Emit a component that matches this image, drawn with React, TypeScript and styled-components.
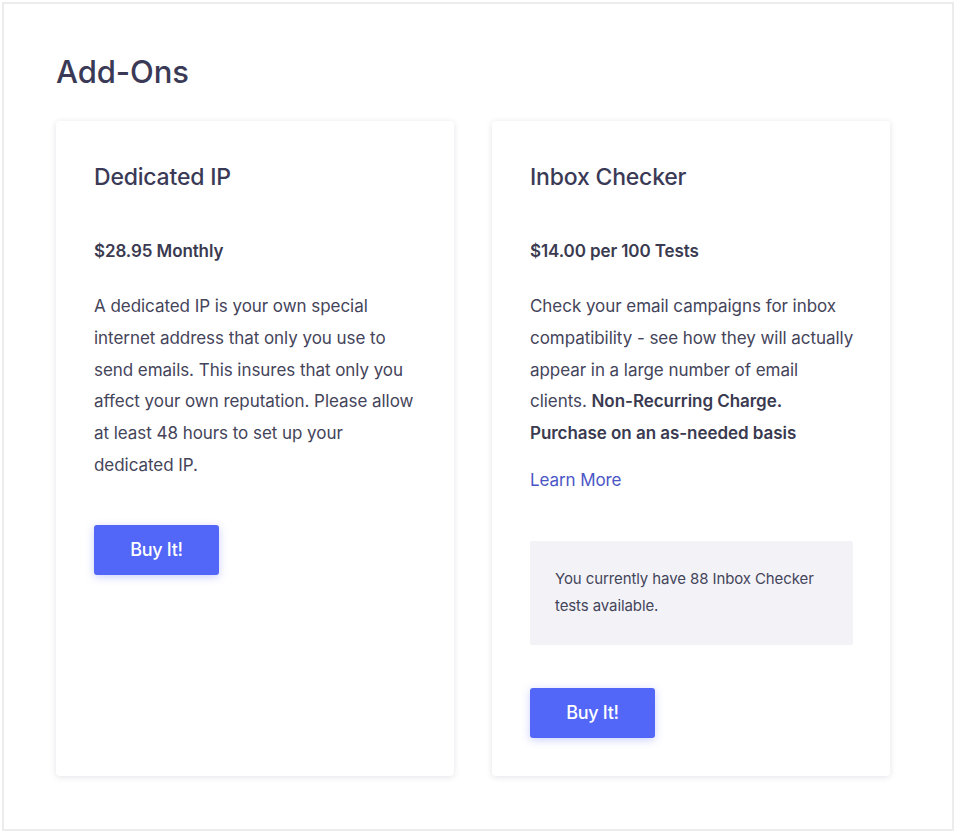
import React from "react";
import styled, { createGlobalStyle } from "styled-components";

const GlobalStyle = createGlobalStyle`
  html, body {
    margin: 0;
    padding: 0;
    background: #ffffff;
  }
  body {
    font-family: Inter, "Noto Sans", sans-serif;
    color: #3b3b55;
    -webkit-font-smoothing: antialiased;
  }
`

const Frame = styled.div`
  margin: 2px;
  height: 829px;
  border: 2px solid #ececec;
  box-sizing: border-box;
  padding: 50px 0 0 52px;
`

const PageTitle = styled.h1`
  margin: 0 0 31px 0;
  font-size: 31px;
  line-height: 36px;
  font-weight: 500;
  color: #3a3a56;
  letter-spacing: -0.1px;
`

const CardGrid = styled.div`
  display: grid;
  grid-template-columns: 398px 398px;
  gap: 38px;
  align-items: stretch;
`

const Card = styled.section`
  background: #ffffff;
  border-radius: 4px;
  box-shadow: 0 1px 6px rgba(40, 40, 80, 0.13);
  padding: 42px 33px 38px 38px;
  display: flex;
  flex-direction: column;
  align-items: flex-start;
`

const CardTitle = styled.h2`
  margin: 0 0 47px 0;
  font-size: 23px;
  line-height: 29px;
  font-weight: 500;
  color: #3a3a56;
  letter-spacing: -0.2px;
`

const Price = styled.div`
  font-size: 17px;
  line-height: 24px;
  font-weight: 600;
  color: #3a3a50;
  margin-bottom: 28px;
  letter-spacing: -0.1px;
`

const Description = styled.p`
  margin: 0;
  font-size: 17px;
  line-height: 31.8px;
  font-weight: 400;
  color: #44445a;
  letter-spacing: -0.05px;
  max-width: 326px;

  strong {
    font-weight: 600;
    color: #3a3a50;
  }
`

const LearnMore = styled.a`
  display: block;
  margin-top: 18px;
  font-size: 17px;
  line-height: 24px;
  color: #4a56c6;
  text-decoration: none;
  letter-spacing: -0.1px;
  cursor: pointer;
`

const InfoBox = styled.div`
  margin-top: 49px;
  width: 323px;
  box-sizing: border-box;
  background: #f3f3f7;
  border-radius: 2px;
  padding: 24px 25px 26px 25px;
  font-size: 15px;
  line-height: 27px;
  color: #44445a;
  letter-spacing: -0.1px;
`

const BuyButton = styled.button<{ $gap: number }>`
  margin-top: ${p => p.$gap}px;
  width: 125px;
  height: 50px;
  border: none;
  border-radius: 3px;
  background: #5266f7;
  color: #ffffff;
  font-family: Inter, "Noto Sans", sans-serif;
  font-size: 18px;
  font-weight: 500;
  letter-spacing: -0.3px;
  box-shadow: 0 2px 8px rgba(82, 102, 247, 0.3);
  cursor: pointer;
`

export default function App() {
  return (
    <>
      <GlobalStyle />
      <Frame>
        <PageTitle>Add-Ons</PageTitle>
        <CardGrid>
          <Card>
            <CardTitle>Dedicated IP</CardTitle>
            <Price>$28.95 Monthly</Price>
            <Description>
              A dedicated IP is your own special internet address that only you use to send emails.
              This insures that only you affect your own reputation. Please allow at least 48 hours
              to set up your dedicated IP.
            </Description>
            <BuyButton $gap={43}>Buy It!</BuyButton>
          </Card>
          <Card>
            <CardTitle>Inbox Checker</CardTitle>
            <Price>$14.00 per 100 Tests</Price>
            <Description>
              Check your email campaigns for inbox compatibility - see how they will actually appear
              in a large number of email clients.{" "}
              <strong>Non-Recurring Charge. Purchase on an as-needed basis</strong>
            </Description>
            <LearnMore>Learn More</LearnMore>
            <InfoBox>You currently have 88 Inbox Checker tests available.</InfoBox>
            <BuyButton $gap={43}>Buy It!</BuyButton>
          </Card>
        </CardGrid>
      </Frame>
    </>
  );
}
